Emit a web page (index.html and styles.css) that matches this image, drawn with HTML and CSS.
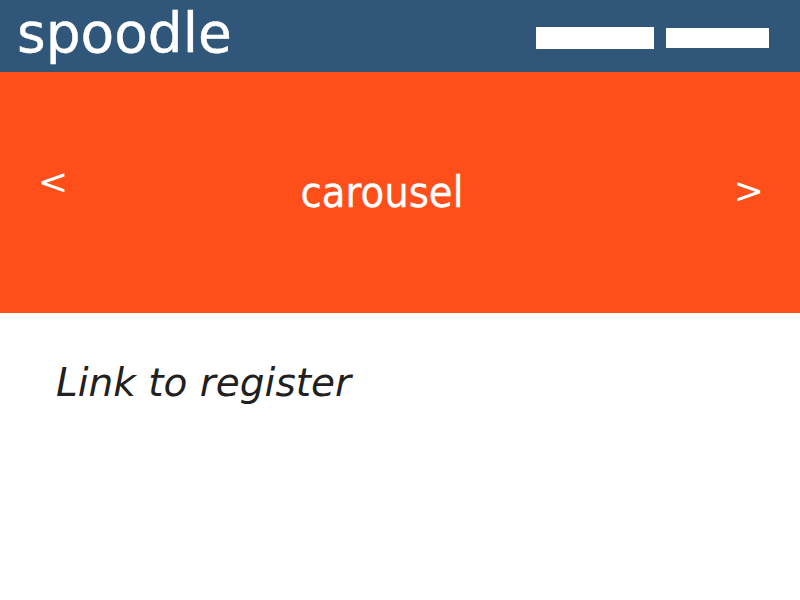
FILE: index.html
```html
<!DOCTYPE html>
<html>
<head>
<meta charset="utf-8">
<link rel="stylesheet" href="styles.css">
</head>
<body>
<header class="topbar">
  <div class="logo">spoodle</div>
  <nav class="nav">
    <span class="nav-btn nav-btn-1"></span>
    <span class="nav-btn nav-btn-2"></span>
  </nav>
</header>
<section class="carousel">
  <span class="arrow arrow-prev">&lt;</span>
  <span class="carousel-label">carousel</span>
  <span class="arrow arrow-next">&gt;</span>
</section>
<main class="content">
  <a class="register-link">Link to register</a>
</main>
</body>
</html>
```
FILE: styles.css
```css
html, body {
  margin: 0;
  padding: 0;
  background: #ffffff;
  font-family: "DejaVu Sans", Verdana, sans-serif;
}
.topbar {
  height: 72px;
  background: #30577a;
  display: flex;
  align-items: flex-start;
  justify-content: space-between;
}
.logo {
  color: #ffffff;
  font-size: 55px;
  line-height: 72px;
  padding-left: 17px;
  margin-top: -3px;
  -webkit-text-stroke: 0.4px #ffffff;
}
.nav {
  display: flex;
  gap: 12px;
  padding-right: 31px;
  padding-top: 27px;
  align-items: flex-start;
}
.nav-btn {
  display: block;
  background: #ffffff;
}
.nav-btn-1 {
  width: 118px;
  height: 22px;
}
.nav-btn-2 {
  width: 103px;
  height: 20px;
  margin-top: 1px;
}
.carousel {
  height: 241px;
  background: #fe4f1b;
  color: #ffffff;
  display: flex;
  align-items: flex-start;
  justify-content: space-between;
}
.arrow {
  font-size: 36px;
  line-height: 1;
}
.arrow-prev {
  padding-left: 38px;
  margin-top: 92px;
}
.arrow-next {
  padding-right: 36px;
  margin-top: 101px;
}
.carousel-label {
  font-family: "DejaVu Sans Condensed", "DejaVu Sans", sans-serif;
  font-size: 43px;
  line-height: 1;
  margin-top: 99px;
  margin-right: 38px;
  -webkit-text-stroke: 0.3px #ffffff;
}
.content {
  padding: 47px 56px;
}
.register-link {
  font-style: italic;
  font-size: 39px;
  color: #231f20;
}
```
